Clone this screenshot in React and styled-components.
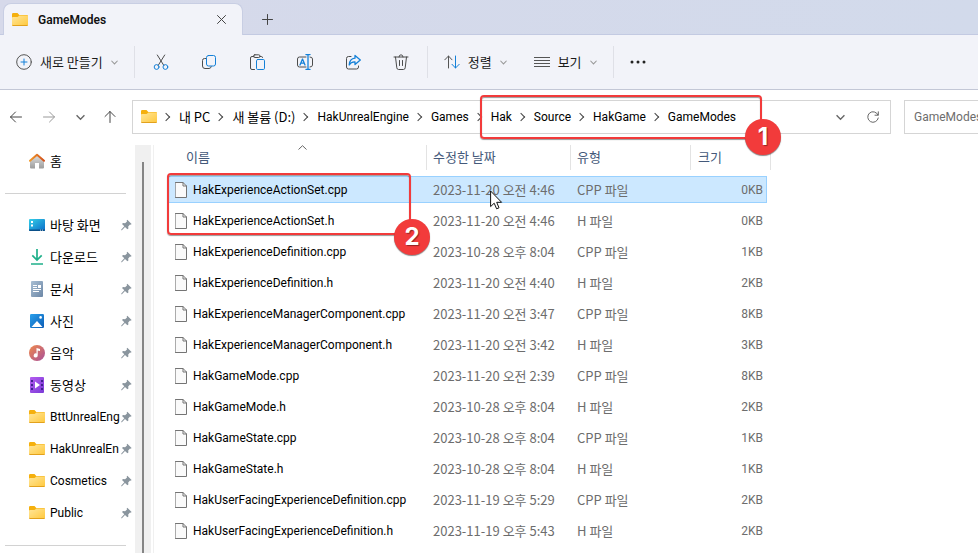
import React from "react";
import styled, { createGlobalStyle } from "styled-components";

const latin = '"Roboto", "Noto Sans CJK KR", sans-serif';
const korean = '"Noto Sans CJK KR", sans-serif';

const Global = createGlobalStyle`
  * { box-sizing: border-box; }
  html, body { margin: 0; }
  body { background: #fff; color: #000; font: 12px/16px ${latin}; overflow: hidden; }
  button { border: 0; padding: 0; background: none; font: inherit; color: inherit; }
  a { color: inherit; text-decoration: none; }
  svg { display: block; flex: none; }
`;

const Window = styled.div`
  position: relative;
  display: flex;
  flex-direction: column;
  min-height: 100vh;
`;

const TabBar = styled.div`
  display: flex;
  align-items: stretch;
  height: 35px;
  padding: 4px 0 0 3px;
  background: linear-gradient(90deg, #d6d9ea, #d2daeb);
  box-shadow: inset 0 -1px #c3cae2;
`;

const Tab = styled.div`
  display: flex;
  align-items: center;
  width: 240px;
  margin-top: -1px;
  padding: 0 15px 0 8px;
  gap: 10px;
  border: 1px solid #c8cee3;
  border-bottom: 0;
  border-radius: 8px 8px 0 0;
  background: #f2f3f9;
`;

const TabTitle = styled.span`
  flex: 1;
  font-weight: 600;
  color: #111;
`;

const IconButton = styled.button`
  display: grid;
  place-items: center;
  width: ${(p) => p.$w || 24}px;
  height: 24px;
  color: ${(p) => p.$color || "#444"};
`;

const NewTab = styled(IconButton)`
  align-self: center;
  margin-left: 12px;
`;

const Toolbar = styled.div`
  display: flex;
  align-items: center;
  height: 55px;
  padding: 0 16px;
  background: #f2f3f9;
  border-bottom: 1px solid #c3c7d6;
  color: #4c4c4c;
`;

const ToolGroup = styled.div`
  display: flex;
  padding: 0 2px;
`;

const Tool = styled.button`
  display: grid;
  place-items: center;
  width: 48px;
  height: 32px;
`;

const ToolMenu = styled.button`
  display: flex;
  align-items: center;
  gap: 8px;
  height: 32px;
  margin-right: ${(p) => p.$after}px;
  font: 13px/18px ${korean};
  color: #1b1b1b;
`;

const Divider = styled.span`
  width: 1px;
  height: 32px;
  margin-right: ${(p) => p.$after || 0}px;
  background: #dfe0e7;
`;

const NavRow = styled.div`
  display: flex;
  align-items: center;
  padding: 10px 0 11px;
`;

const NavButtons = styled.div`
  display: flex;
  justify-content: space-between;
  width: 110px;
  margin: 0 14px 0 8px;
`;

const AddressBar = styled.nav`
  display: flex;
  flex: 1;
  align-items: center;
  height: 34px;
  padding: 0 0 0 8px;
  border: 1px solid #d5d5d5;
`;

const Crumbs = styled.ol`
  display: flex;
  flex: 1;
  align-items: center;
  margin: 0;
  padding: 0;
  list-style: none;
`;

const Crumb = styled.li`
  display: flex;
  align-items: center;
  white-space: nowrap;
  font: ${(p) => (p.$ko ? `13px/18px ${korean}` : `12px/18px ${latin}`)};

  &::before {
    content: "";
    width: 5px;
    height: 5px;
    margin: 0 10px 0 6px;
    border: solid #444;
    border-width: 1px 1px 0 0;
    transform: rotate(45deg);
  }
`;

const Search = styled.input`
  width: 74px;
  height: 34px;
  margin-left: 13px;
  padding: 0 0 0 9px;
  border: 1px solid #d5d5d5;
  border-right: 0;
  border-radius: 0;
  font: 12px/16px ${latin};
  color: #6d6d6d;

  &::placeholder { color: #6d6d6d; opacity: 1; }
`;

const Body = styled.div`
  display: flex;
  flex: 1;
`;

const Sidebar = styled.nav`
  width: 135px;
  padding-left: 5px;
`;

const SideGroup = styled.ul`
  width: 121px;
  margin: 0;
  padding: ${(p) => (p.$top ? "0 0 16px" : "15px 0 16px")};
  border-bottom: 1px solid #d2d2d2;
  list-style: none;
`;

const SideItem = styled.li`
  display: flex;
  align-items: center;
  height: 32px;
  width: 127px;
  padding-left: 24px;
`;

const SideLink = styled.a`
  display: flex;
  align-items: center;
  flex: 1;
  min-width: 0;
  gap: 5px;
  white-space: nowrap;
  font: ${(p) => (p.$ko ? `13px/18px ${korean}` : `12px/18px ${latin}`)};
`;

const Track = styled.div`
  width: 16px;
  padding: 17px 7px 0;
  background: #f0f0f0;
`;

const Thumb = styled.div`
  width: 2px;
  height: 100%;
  background: #858585;
`;

const Main = styled.main`
  flex: 1;
  min-width: 0;
  margin-left: 2px;
  padding-left: 13px;
  border-left: 1px solid #f0f0f0;
`;

const Files = styled.table`
  table-layout: fixed;
  width: 604px;
  border-spacing: 0;
`;

const HeadCell = styled.th`
  position: relative;
  width: ${(p) => p.$w}px;
  height: 25px;
  padding: 0 0 2px ${(p) => p.$pad}px;
  border-right: 1px solid #e3e3e3;
  text-align: left;
  font: 13px/18px ${korean};
  color: #44597a;
`;

const SortMark = styled.svg`
  position: absolute;
  top: 0;
  left: 131px;
`;

const Gap = styled.td`
  height: 4px;
  padding: 0;
`;

const Cell = styled.td`
  height: 31px;
  padding: 2px ${(p) => (p.$last ? 4 : 0)}px 2px 0;
`;

const CellBox = styled.div`
  display: flex;
  align-items: center;
  justify-content: ${(p) => (p.$end ? "flex-end" : "flex-start")};
  gap: 6px;
  height: 27px;
  padding: 0 ${(p) => (p.$end ? 3 : 0)}px 0 ${(p) => p.$pad || 0}px;
  border: solid ${(p) => (p.$on ? "#99d1ff" : "transparent")};
  border-width: 1px ${(p) => (p.$end ? 1 : 0)}px 1px ${(p) => (p.$start ? 1 : 0)}px;
  background: ${(p) => (p.$on ? "#cce8ff" : "transparent")};
  white-space: nowrap;
  font: ${(p) => (p.$ko ? `13px/18px ${korean}` : `12px/18px ${latin}`)};
  color: ${(p) => (p.$start ? "#000" : "#6d6d6d")};
`;

const Callout = styled.div`
  position: absolute;
  left: ${(p) => p.$x}px;
  top: ${(p) => p.$y}px;
  width: ${(p) => p.$w}px;
  height: ${(p) => p.$h}px;
  border: 2px solid #f23b3b;
  border-radius: 4px;
  box-shadow: 0 1px 1px #0006, inset 0 1px 1px #0006;
  pointer-events: none;
`;

const Badge = styled.span`
  position: absolute;
  right: -21px;
  bottom: ${(p) => p.$bottom}px;
  display: grid;
  place-items: center;
  width: 36px;
  height: 36px;
  border-radius: 50%;
  background: #f23b3b;
  box-shadow: 0 1px 1px #0007;
  color: #fff;
  font: 700 24px/36px "Inter", sans-serif;
  text-shadow: 1px 1px 1px #0006;
`;

const Pointer = styled.svg`
  position: absolute;
  left: 490px;
  top: 190px;
`;

const Stroke = ({ w = 16, h = 16, s = 1, children }) => (
  <svg width={w} height={h} viewBox={`0 0 ${w} ${h}`} fill="none" stroke="currentColor" strokeWidth={s} strokeLinecap="round" strokeLinejoin="round" aria-hidden="true">
    {children}
  </svg>
);

const Folder = () => (
  <svg width="16" height="16" viewBox="0 0 16 16" aria-hidden="true">
    <defs>
      <linearGradient id="fold" x1="0" y1="0" x2="1" y2="1">
        <stop offset="0" stopColor="#ffe69a" />
        <stop offset="1" stopColor="#ffc83c" />
      </linearGradient>
    </defs>
    <path d="M0 2.2Q0 1 1.2 1H5.5L7.3 3H14.8Q16 3 16 4.2V7H0Z" fill="#f5b00e" />
    <path d="M0 5.8Q0 5 1 5H5.6L7.4 3.6H15Q16 3.6 16 4.6V12.6Q16 14 14.7 14H1.3Q0 14 0 12.6Z" fill="url(#fold)" />
    <path d="M0 12.4Q0 14 1.3 14H14.7Q16 14 16 12.4Q15.7 13 14.7 13H1.3Q.4 13 0 12.4Z" fill="#e2a11c" />
  </svg>
);

const Chevron = ({ size = 7 }) => (
  <svg width={size} height={size} viewBox="0 0 8 8" fill="none" stroke={size > 7 ? "#666" : "#999"} strokeWidth="1.2" aria-hidden="true">
    <path d="M.5 2L4 5.6L7.5 2" />
  </svg>
);

const FileIcon = () => (
  <Stroke w={12}>
    <path d="M.5.5H8L11.5 4V15.5H.5Z" fill="#fafafa" stroke="#747474" strokeLinejoin="miter" />
    <path d="M8 .5V4H11.5" stroke="#747474" />
  </Stroke>
);

const Pin = () => (
  <svg width="11" height="12" viewBox="0 0 11 12" fill="#8a959e" aria-hidden="true">
    <path d="M6.3.7L10.6 5L9.8 5.8L9 5.6L7.2 7.4L7.4 9.4L6.4 10.3L4 8L.9 11.2L.2 11.3L.3 10.6L3.3 7.3L1 5L2 4L4.1 4.2L6 2.4L5.7 1.4Z" />
  </svg>
);

const icons = {
  home: (
    <svg width="16" height="16" viewBox="0 0 16 16">
      <defs>
        <linearGradient id="wall" x2="0" y2="1"><stop stopColor="#e2e2e2" /><stop offset="1" stopColor="#9c9c9c" /></linearGradient>
        <linearGradient id="roof"><stop stopColor="#f29a2a" /><stop offset="1" stopColor="#d2501b" /></linearGradient>
      </defs>
      <path d="M1 7L8 1.5L15 7V14.4Q15 15.5 13.9 15.5H10V10H6V15.5H2.1Q1 15.5 1 14.4Z" fill="url(#wall)" />
      <path d="M1 7.8L8 1.7L15 7.8" fill="none" stroke="url(#roof)" strokeWidth="2" strokeLinecap="round" strokeLinejoin="round" />
    </svg>
  ),
  desktop: (
    <svg width="16" height="16" viewBox="0 0 16 16">
      <defs><linearGradient id="desk" x2="1" y2="1"><stop stopColor="#35d0e8" /><stop offset="1" stopColor="#0b6cc8" /></linearGradient></defs>
      <rect y="2" width="16" height="12" rx="1" fill="url(#desk)" />
      <path d="M0 12.6H16V13Q16 14 15 14H1Q0 14 0 13Z" fill="#0a4f88" />
      <path d="M2 4H4V6H2ZM2 7.5H4V9.5H2ZM11 12.8H12V13.6H11ZM13 12.8H14V13.6H13Z" fill="#fff" />
    </svg>
  ),
  download: (
    <svg width="16" height="16" viewBox="0 0 16 16" fill="none" stroke="#1fb08a" strokeWidth="1.7">
      <path d="M8 0V11M3.3 6.4L8 11.1L12.7 6.4M2 15H14" />
    </svg>
  ),
  document: (
    <svg width="16" height="16" viewBox="0 0 16 16">
      <defs><linearGradient id="docs" x2="1" y2="1"><stop stopColor="#a9bfd4" /><stop offset="1" stopColor="#6c87a6" /></linearGradient></defs>
      <rect x="2" y="0" width="12" height="16" rx="1" fill="url(#docs)" />
      <path d="M4 4.5H8M4 6.5H8M4 8.5H12M4 10.5H10" stroke="#fff" strokeWidth="1" />
      <path d="M9 4H12V7H9Z" fill="#fff" />
    </svg>
  ),
  picture: (
    <svg width="16" height="16" viewBox="0 0 16 16">
      <defs><linearGradient id="pics" x2="1" y2="1"><stop stopColor="#2aa0ec" /><stop offset="1" stopColor="#0b5cb5" /></linearGradient></defs>
      <rect x="1" y="1" width="14" height="14" rx="1.2" fill="url(#pics)" />
      <path d="M2.5 14L8 8L13.5 14Z" fill="#fff" />
      <circle cx="11.6" cy="4.4" r="1.3" fill="#fff" />
    </svg>
  ),
  music: (
    <svg width="16" height="16" viewBox="0 0 16 16">
      <defs><linearGradient id="mus" x2="1" y2="1"><stop stopColor="#f08a4b" /><stop offset="1" stopColor="#a84f9a" /></linearGradient></defs>
      <circle cx="8" cy="8" r="8" fill="url(#mus)" />
      <path d="M7.5 3L11 4V6L8.7 5.4V10.4A2 2 0 1 1 7.5 8.6Z" fill="#fff" />
    </svg>
  ),
  video: (
    <svg width="16" height="16" viewBox="0 0 16 16">
      <defs><linearGradient id="vid" x2="1" y2="1"><stop stopColor="#b45cf0" /><stop offset="1" stopColor="#7a3bd6" /></linearGradient></defs>
      <rect x="1" y="0" width="14" height="16" rx="1" fill="url(#vid)" />
      <path d="M2 3H4V5H2ZM2 7H4V9H2ZM2 11H4V13H2ZM12 3H14V5H12ZM12 7H14V9H12ZM12 11H14V13H12Z" fill="#41218f" />
      <path d="M6 4.5L11 8L6 11.5Z" fill="#fff" />
    </svg>
  ),
  folder: <Folder />,
};

const blue = "#1480d8";

const tools = [
  ["잘라내기", <><path d="M4.3 1L10.8 11.4M11.7 1L5.2 11.4" /><g stroke={blue}><circle cx="3.6" cy="13" r="2.4" /><circle cx="12.4" cy="13" r="2.4" /></g></>],
  ["복사", <><path d="M5 4.5H3.5Q1.5 4.5 1.5 6.5V12Q1.5 14.5 4 14.5H8Q10 14.5 10.3 12.5" /><rect x="5.5" y="1.5" width="9" height="10.5" rx="2" stroke={blue} /></>],
  ["붙여넣기", <><path d="M5 2.5H3Q1.5 2.5 1.5 4V14Q1.5 15.5 3 15.5H5.5M11 2.5H12.5Q13.5 2.5 13.5 3.5" /><rect x="4.5" y=".8" width="6.5" height="2.7" rx="1.3" /><rect x="7.5" y="5.5" width="8" height="10" rx="1.2" stroke={blue} /></>],
  ["이름 바꾸기", <><path d="M9 3H2.5Q.5 3 .5 5V11Q.5 13 2.5 13H9M13 3Q15.5 3 15.5 5V11Q15.5 13 13 13" /><path d="M3 11L5.5 5L8 11M3.8 9.2H7.2M11 .5V15.5M9 .5H13M9 15.5H13" stroke={blue} strokeWidth="1.3" /></>],
  ["공유", <><path d="M6 2.5H3.5Q1.5 2.5 1.5 4.5V13Q1.5 15 3.5 15H11.5Q13.5 15 13.5 13V12" /><path d="M10 1.5L15.3 6L10 10.5V7.8Q6 7.5 4.2 11Q4.5 4.8 10 4.2Z" stroke={blue} strokeWidth="1.3" /></>],
  ["삭제", <><path d="M1 3H15M2.5 3L3.8 13.8Q4 15.5 5.6 15.5H10.4Q12 15.5 12.2 13.8L13.5 3M6 3Q6 .8 8 .8Q10 .8 10 3M6.5 6.5V11.5M9.5 6.5V11.5" /></>],
];

const crumbs = ["내 PC", "새 볼륨 (D:)", "HakUnrealEngine", "Games", "Hak", "Source", "HakGame", "GameModes"];

const places = [
  ["desktop", "바탕 화면"], ["download", "다운로드"], ["document", "문서"], ["picture", "사진"],
  ["music", "음악"], ["video", "동영상"], ["folder", "BttUnrealEng"],
  ["folder", "HakUnrealEn"], ["folder", "Cosmetics"], ["folder", "Public"],
];

const files = [
  ["HakExperienceActionSet.cpp", "2023-11-20 오전 4:46", "0KB"],
  ["HakExperienceActionSet.h", "2023-11-20 오전 4:46", "0KB"],
  ["HakExperienceDefinition.cpp", "2023-10-28 오후 8:04", "1KB"],
  ["HakExperienceDefinition.h", "2023-11-20 오전 4:40", "2KB"],
  ["HakExperienceManagerComponent.cpp", "2023-11-20 오전 3:47", "8KB"],
  ["HakExperienceManagerComponent.h", "2023-11-20 오전 3:42", "3KB"],
  ["HakGameMode.cpp", "2023-11-20 오전 2:39", "8KB"],
  ["HakGameMode.h", "2023-10-28 오후 8:04", "2KB"],
  ["HakGameState.cpp", "2023-10-28 오후 8:04", "1KB"],
  ["HakGameState.h", "2023-10-28 오후 8:04", "1KB"],
  ["HakUserFacingExperienceDefinition.cpp", "2023-11-19 오후 5:29", "2KB"],
  ["HakUserFacingExperienceDefinition.h", "2023-11-19 오후 5:43", "2KB"],
];

const isKorean = (text) => /[가-힣]/.test(text);

export default function App() {
  return (
    <Window>
      <Global />
      <TabBar>
        <Tab>
          <Folder />
          <TabTitle>GameModes</TabTitle>
          <IconButton $w={12} aria-label="탭 닫기">
            <Stroke w={9} h={9}><path d="M.5.5L8.5 8.5M8.5.5L.5 8.5" /></Stroke>
          </IconButton>
        </Tab>
        <NewTab aria-label="새 탭">
          <Stroke w={11} h={11}><path d="M5.5.5V10.5M.5 5.5H10.5" /></Stroke>
        </NewTab>
      </TabBar>

      <Toolbar>
        <ToolMenu $after={16}>
          <Stroke><circle cx="8" cy="8" r="7.3" stroke="#555" /><path d="M8 5V11M5 8H11" stroke={blue} /></Stroke>
          새로 만들기
          <Chevron />
        </ToolMenu>
        <Divider />
        <ToolGroup>
          {tools.map(([label, art]) => (
            <Tool key={label} aria-label={label}><Stroke>{art}</Stroke></Tool>
          ))}
        </ToolGroup>
        <Divider $after={16} />
        <ToolMenu $after={27}>
          <Stroke><path d="M4.5 14V2M.8 5.8L4.5 2L8 5.8" stroke="#555" /><path d="M11.5 2V14M8 10.3L11.5 14L15.2 10.3" stroke={blue} /></Stroke>
          정렬
          <Chevron />
        </ToolMenu>
        <ToolMenu $after={16}>
          <Stroke><path d="M0 3.5H16M0 6.5H16M0 9.5H16M0 12.5H16" stroke="#555" /></Stroke>
          보기
          <Chevron />
        </ToolMenu>
        <Divider />
        <Tool aria-label="더 보기">
          <svg width="16" height="4" viewBox="0 0 16 4" fill="#222"><circle cx="2" cy="2" r="1.5" /><circle cx="8" cy="2" r="1.5" /><circle cx="14" cy="2" r="1.5" /></svg>
        </Tool>
      </Toolbar>

      <NavRow>
        <NavButtons>
          <IconButton $w={16} aria-label="뒤로"><Stroke w={12} h={12}><path d="M.5 6H11.5M5.5 1L.5 6L5.5 11" /></Stroke></IconButton>
          <IconButton $w={20} $color="#999" aria-label="앞으로"><Stroke w={12} h={12}><path d="M.5 6H11.5M6.5 1L11.5 6L6.5 11" /></Stroke></IconButton>
          <IconButton $w={12} aria-label="최근 위치"><Chevron size={9} /></IconButton>
          <IconButton $w={16} aria-label="위로"><Stroke w={12} h={12}><path d="M6 .5V11.5M1 5.5L6 .5L11 5.5" /></Stroke></IconButton>
        </NavButtons>
        <AddressBar aria-label="경로">
          <Folder />
          <Crumbs>
            {crumbs.map((name) => (
              <Crumb key={name} $ko={isKorean(name)}><a href="#path">{name}</a></Crumb>
            ))}
          </Crumbs>
          <IconButton $w={32} aria-label="이전 위치"><Chevron size={9} /></IconButton>
          <IconButton $w={34} $color="#666" aria-label="새로 고침">
            <Stroke w={12} h={12}><path d="M11 4A5.3 5.3 0 1 0 11.3 7M11.3.8V4.2H8" /></Stroke>
          </IconButton>
        </AddressBar>
        <Search aria-label="GameModes 검색" placeholder="GameModes 검색" />
      </NavRow>

      <Body>
        <Sidebar aria-label="탐색 창">
          <SideGroup $top>
            <SideItem><SideLink href="#home" $ko>{icons.home}홈</SideLink></SideItem>
          </SideGroup>
          <SideGroup>
            {places.map(([icon, name]) => (
              <SideItem key={name}>
                <SideLink href="#place" $ko={isKorean(name)}>{icons[icon]}{name}</SideLink>
                <Pin />
              </SideItem>
            ))}
          </SideGroup>
        </Sidebar>
        <Track><Thumb /></Track>
        <Main>
          <Files>
            <thead>
              <tr>
                <HeadCell $w={260} $pad={19} aria-sort="ascending">
                  이름
                  <SortMark width="9" height="5" viewBox="0 0 9 5" fill="none" stroke="#666"><path d="M.5 4.5L4.5.7L8.5 4.5" /></SortMark>
                </HeadCell>
                <HeadCell $w={144} $pad={6}>수정한 날짜</HeadCell>
                <HeadCell $w={120} $pad={6}>유형</HeadCell>
                <HeadCell $w={80} $pad={7}>크기</HeadCell>
              </tr>
            </thead>
            <tbody>
              <tr><Gap colSpan={4} /></tr>
              {files.map(([name, date, size], i) => {
                const on = i === 0;
                return (
                  <tr key={name} aria-selected={on}>
                    <Cell><CellBox $on={on} $start $pad={7}><FileIcon />{name}</CellBox></Cell>
                    <Cell><CellBox $on={on} $ko $pad={6}>{date}</CellBox></Cell>
                    <Cell><CellBox $on={on} $ko $pad={6}>{name.endsWith(".cpp") ? "CPP 파일" : "H 파일"}</CellBox></Cell>
                    <Cell $last><CellBox $on={on} $end>{size}</CellBox></Cell>
                  </tr>
                );
              })}
            </tbody>
          </Files>
        </Main>
      </Body>

      <Pointer width="13" height="20" viewBox="0 0 13 20" aria-hidden="true">
        <path d="M.6 1V16.6L4.2 13.2L6.6 18.8L9 17.8L6.7 12.3H11.6Z" fill="#fff" stroke="#111" />
      </Pointer>
      <Callout $x={480} $y={95} $w={282} $h={44}><Badge $bottom={-18}>1</Badge></Callout>
      <Callout $x={167} $y={173} $w={244} $h={62}><Badge $bottom={-22}>2</Badge></Callout>
    </Window>
  );
}
